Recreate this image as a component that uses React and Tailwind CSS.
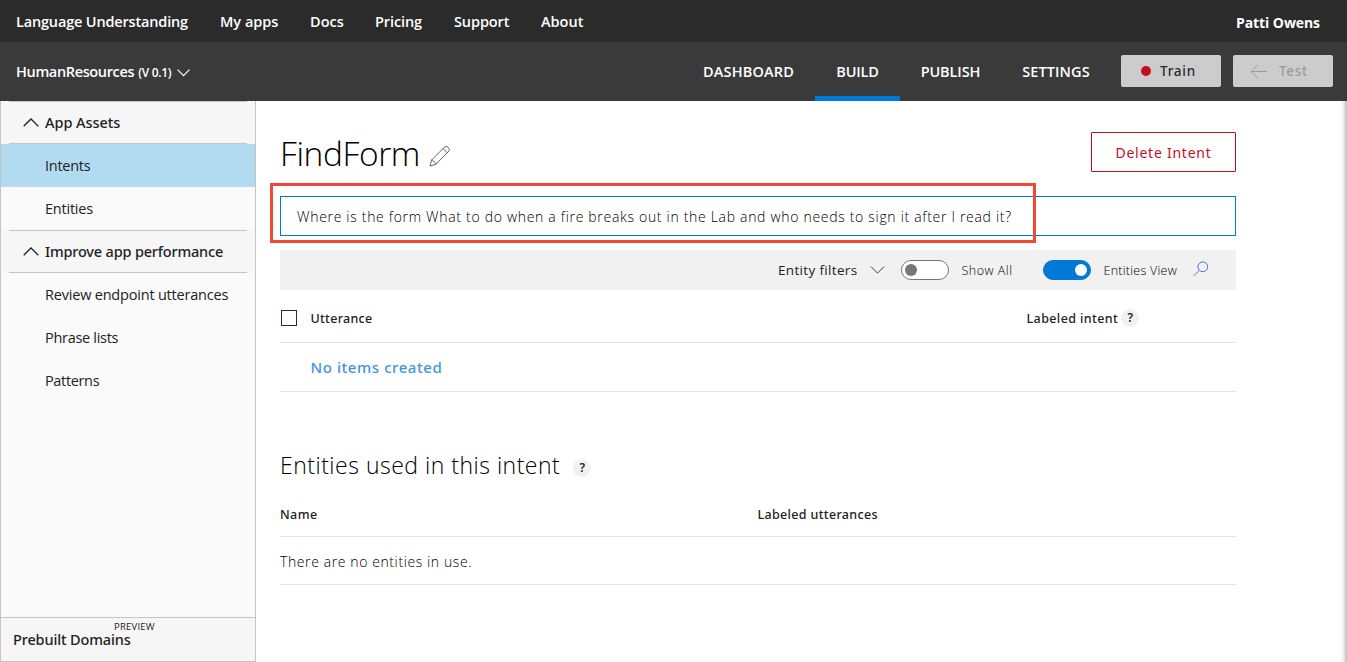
const topLinks = [
  { label: "Language Understanding", cls: "w-[204px] tracking-[-0.17px]" },
  { label: "My apps", cls: "w-[90px]" },
  { label: "Docs", cls: "w-[65px] tracking-[0.05px]" },
  { label: "Pricing", cls: "w-[79px] tracking-[-0.1px]" },
  { label: "Support", cls: "w-[87px] tracking-[-0.1px]" },
  { label: "About", cls: "w-[50px]" },
];

const tabs = [
  { label: "DASHBOARD", cls: "w-[133px] tracking-[0.15px]" },
  { label: "BUILD", cls: "w-[85px] tracking-[-0.15px]", active: true },
  { label: "PUBLISH", cls: "w-[101px] tracking-[-0.1px]" },
  { label: "SETTINGS", cls: "w-[110px] tracking-[0.1px]" },
];

function Chevron({ up = false, className }) {
  return (
    <svg viewBox="0 0 16 9" fill="none" stroke="currentColor" className={className}>
      <path d={up ? "M0.7 8.3 8 1l7.3 7.3" : "M0.7 0.7 8 8l7.3-7.3"} />
    </svg>
  );
}

function TopBar() {
  return (
    <div className="flex h-[42px] items-center justify-between bg-[#2b2b2b] pr-[27px] pl-4 text-[14.5px] font-semibold text-white">
      <nav className="flex pt-[1.5px]">
        {topLinks.map((l) => (
          <a key={l.label} className={`whitespace-nowrap ${l.cls}`}>{l.label}</a>
        ))}
      </nav>
      <span className="pt-0.5 text-[14px] font-bold tracking-[-0.08px]">Patti Owens</span>
    </div>
  );
}

function AppBar() {
  return (
    <div className="flex h-[59px] justify-between bg-[#3a3a3a] pr-3.5 pl-4 text-white">
      <div className="flex items-center font-semibold">
        <span className="text-[14.5px] tracking-[-0.36px]">HumanResources</span>
        <span className="ml-1 pt-0.5 text-[12px] tracking-[-0.3px]">(V 0.1)</span>
        <Chevron className="mt-[3px] ml-1.5 h-[7.5px] w-[13px] stroke-[1.5]" />
      </div>
      <div className="flex">
        {tabs.map((t) => (
          <a
            key={t.label}
            className={`flex items-center justify-center text-[14.5px] font-semibold ${t.cls} border-y-[5px] border-t-transparent ${
              t.active ? "border-b-[#0078d7]" : "border-b-transparent"
            }`}
          >
            {t.label}
          </a>
        ))}
        <div className="ml-2.5 flex gap-3 pt-[13px] text-[13.5px] font-medium font-['Noto_Sans',sans-serif]">
          <button className="flex h-8 w-[100px] items-center rounded-[2px] bg-[#ccc] pl-5 text-[#2b2b2b]">
            <span className="size-2.5 rounded-full bg-[#c50f1f]" />
            <span className="ml-[9px] pt-px tracking-[0.75px]">Train</span>
          </button>
          <button className="flex h-8 w-[100px] items-center rounded-[2px] bg-[#ccc] pl-[17px] text-[#9c9c9c]">
            <svg viewBox="0 0 17 15" fill="none" stroke="currentColor" className="mt-px h-[15px] w-[17px]">
              <path d="M17 7.5H1M8 .7 1 7.5l7 6.8" />
            </svg>
            <span className="ml-3 pt-px tracking-[0.7px]">Test</span>
          </button>
        </div>
      </div>
    </div>
  );
}

function Section({ title, cls }) {
  return (
    <div className={`bg-[#f6f6f6] px-2 text-[#222] ${cls}`}>
      <div className="flex h-full items-center border-y border-[#c4c4c4] pl-[13.5px] font-['Noto_Sans',sans-serif] text-[14.5px] font-medium">
        <Chevron up className="mr-[6.5px] h-[9px] w-4 stroke-[1.3]" />
        {title}
      </div>
    </div>
  );
}

function Item({ label, active, cls }) {
  return (
    <a className={`flex h-[43px] items-center pl-11 text-[14.5px] whitespace-nowrap text-[#222] ${cls} ${active ? "bg-[#b2dbf2]" : ""}`}>
      {label}
    </a>
  );
}

function Sidebar() {
  return (
    <aside className="flex w-64 shrink-0 flex-col border-x border-[#c4c4c4] bg-[#fafafa]">
      <Section title="App Assets" cls="h-[43px] tracking-[-0.04px]" />
      <Item label="Intents" active cls="tracking-[-0.28px]" />
      <Item label="Entities" cls="tracking-[-0.22px]" />
      <Section title="Improve app performance" cls="h-[43px] tracking-[-0.18px]" />
      <Item label="Review endpoint utterances" cls="tracking-[-0.2px]" />
      <Item label="Phrase lists" cls="tracking-[-0.3px]" />
      <Item label="Patterns" cls="tracking-[-0.35px]" />
      <div className="mt-auto flex h-[45px] flex-col border-y border-[#c4c4c4] bg-[#f6f6f6] pl-3 text-[#222]">
        <span className="mt-[3px] ml-[101px] text-[9.5px] leading-[11px] tracking-[0.22px]">PREVIEW</span>
        <span className="text-[14.5px] leading-[15px] font-medium tracking-[-0.14px] font-['Noto_Sans',sans-serif]">
          Prebuilt Domains
        </span>
      </div>
    </aside>
  );
}

function Help({ className }) {
  return (
    <span
      className={`flex size-[18px] items-center justify-center rounded-full bg-[#f1f1f1] font-['Noto_Sans',sans-serif] text-[12px] font-semibold text-[#222] ${className}`}
    >
      ?
    </span>
  );
}

function Toggle({ on, className }) {
  return (
    <span
      className={`flex h-5 w-12 items-center rounded-full border ${
        on ? "justify-end border-[#0078d7] bg-[#0078d7]" : "border-[#767676] bg-white"
      } px-[3px] ${className}`}
    >
      <span className={`size-3 rounded-full ${on ? "bg-white" : "bg-[#767676]"}`} />
    </span>
  );
}

function Main() {
  return (
    <main className="w-[980px] pt-[31px] pl-6 text-[#222]">
      <div className="flex h-10 justify-between">
        <div className="flex items-center pt-0.5">
          <h1 className="text-[33.5px] leading-10 font-light tracking-[-0.4px] text-black">FindForm</h1>
          <svg viewBox="0 0 22 22" fill="none" stroke="#666" strokeLinejoin="round" className="mt-[5px] ml-[9px] size-[22px]">
            <path d="M1 21l1.6-6L15.7 1.9q1.5-1.3 3.3.3l.6.6q1.6 1.8.2 3.3L6.9 19.3 1 21zM14 3.6l4.2 4.2M2.6 15q1.2-.2 1.5.7t1.4 1.2q1.3.5 1.4 2.4" />
          </svg>
        </div>
        <button className="h-10 w-[145px] rounded-[1px] border border-[#c50f1f] bg-white font-['Noto_Sans',sans-serif] text-[14px] tracking-[0.75px] text-[#c50f1f]">
          Delete Intent
        </button>
      </div>

      <div className="relative mt-6">
        <div className="flex h-10 items-center border border-[#0078d7] pl-4 text-[14px] font-light tracking-[0.69px] whitespace-nowrap text-black">
          Where is the form What to do when a fire breaks out in the Lab and who needs to sign it after I read it?
        </div>
        <div className="absolute -top-[13px] -left-2.5 h-[60px] w-[766px] border-[3px] border-[#f04835]" />
      </div>

      <div className="mt-3.5 flex h-10 items-center bg-[#f1f1f1] pl-[498px] whitespace-nowrap">
        <span className="w-[92px] text-[13.5px] tracking-[0.33px]">Entity filters</span>
        <Chevron className="h-2 w-[15px]" />
        <Toggle className="ml-4" />
        <span className="ml-[12.5px] w-[81.5px] pt-[3px] text-[12.5px] font-light tracking-[0.5px] text-black">Show All</span>
        <Toggle on />
        <span className="ml-[12.5px] w-[89.5px] pt-[3px] text-[12.5px] font-light tracking-[0.25px] text-black">Entities View</span>
        <svg viewBox="0 0 16 16" fill="none" stroke="#4a6fdc" className="mb-[3px] size-4">
          <circle cx="9.8" cy="5.8" r="4.9" />
          <path d="M6.3 9.3.8 14.8" />
        </svg>
      </div>

      <div className="flex h-[53px] items-center border-b border-[#e3e3e3] pt-1 pl-px font-['Noto_Sans',sans-serif] text-[12.5px] font-medium">
        <span className="size-4 border border-[#3c1f44] bg-white" />
        <span className="ml-[13.5px] w-[716px] pt-[3px] tracking-[0.3px]">Utterance</span>
        <span className="pt-[3px] tracking-[0.4px]">Labeled intent</span>
        <Help className="ml-[3px]" />
      </div>
      <div className="flex h-[49px] items-center border-b border-[#e3e3e3] pl-[30.5px] font-['Noto_Sans',sans-serif] text-[15px] font-medium tracking-[0.57px] text-[#4394de]">
        No items created
      </div>

      <div className="mt-[53px] flex h-10 items-center">
        <h2 className="text-[23px] font-light tracking-[0.5px] text-black">Entities used in this intent</h2>
        <Help className="mt-[5px] ml-[13px]" />
      </div>
      <div className="flex h-[52px] items-center border-b border-[#e3e3e3] pt-2.5 font-['Noto_Sans',sans-serif] text-[12.5px] font-medium">
        <span className="w-[477.5px] tracking-[0.4px]">Name</span>
        <span className="tracking-[0.34px]">Labeled utterances</span>
      </div>
      <div className="flex h-12 items-center border-b border-[#e3e3e3] pt-0.5 text-[14px] font-light tracking-[0.6px] text-black">
        There are no entities in use.
      </div>
    </main>
  );
}

export default function App() {
  return (
    <div className="flex h-[662px] w-[1347px] flex-col overflow-hidden bg-white font-['Open_Sans','Noto_Sans',sans-serif]">
      <TopBar />
      <AppBar />
      <div className="flex grow">
        <Sidebar />
        <Main />
        <div className="ml-auto w-2 bg-linear-to-r from-white via-[#f3f3f3] to-[#bdbdbd]" />
      </div>
    </div>
  );
}
